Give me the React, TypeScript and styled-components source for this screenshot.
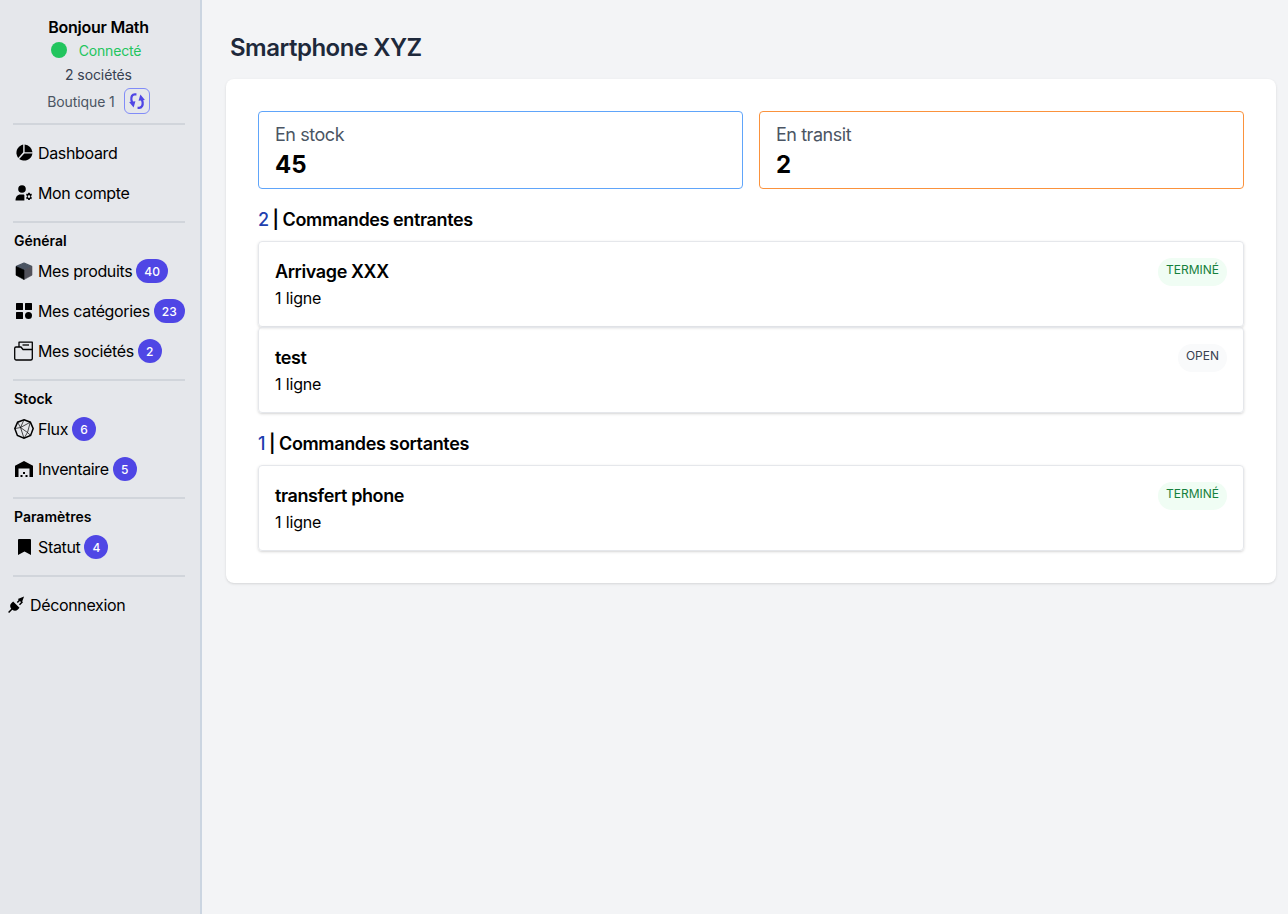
import React from "react";
import styled, { createGlobalStyle } from "styled-components";

const Global = createGlobalStyle`
  html, body { margin: 0; padding: 0; height: 100%; }
  body { font-family: Inter, "Liberation Sans", sans-serif; background: #f3f4f6; color: #000; }
  * { box-sizing: border-box; }
`;

const Layout = styled.div`
  display: flex;
  min-height: 914px;
`;
const Sidebar = styled.aside`
  width: 202px;
  flex: none;
  background: #e5e7eb;
  border-right: 2px solid #cbd5e1;
  padding: 15px 0 0 13px;
`;
const SideInner = styled.div`
  width: 172px;
`;
const UserBlock = styled.div`
  display: flex;
  flex-direction: column;
  align-items: center;
  margin-left: -1px;
`;
const Hello = styled.div`
  font-size: 16px;
  line-height: 24px;
  font-weight: 600;
  letter-spacing: -0.25px;
`;
const Status = styled.div`
  display: flex;
  align-items: center;
  height: 20px;
  margin: 1px 5px 0 0;
  font-size: 14px;
  letter-spacing: -0.2px;
  color: #22c55e;
  gap: 12px;
`;
const Dot = styled.span`
  width: 16px;
  height: 16px;
  border-radius: 50%;
  background: #22c55e;
`;
const Count = styled.div`
  font-size: 14px;
  line-height: 20px;
  letter-spacing: -0.1px;
  color: #374151;
  margin-top: 5px;
`;
const Shop = styled.div`
  display: flex;
  align-items: center;
  gap: 9px;
  font-size: 14px;
  letter-spacing: -0.1px;
  color: #4b5563;
  margin-top: 3px;
`;
const SwitchButton = styled.button`
  width: 26px;
  height: 26px;
  padding: 0;
  border: 1px solid #818cf8;
  border-radius: 6px;
  background: transparent;
  color: #4f46e5;
  display: flex;
  align-items: center;
  justify-content: center;
`;
const Divider = styled.hr<{ $top: number }>`
  border: 0;
  height: 2px;
  background: #d1d5db;
  margin: ${(p) => p.$top}px 0 0;
`;
const Section = styled.div`
  font-size: 14px;
  line-height: 20px;
  font-weight: 600;
  margin: 8px 0 0 1px;
`;
const Item = styled.div<{ $gap?: number; $outdent?: boolean }>`
  display: flex;
  align-items: center;
  height: 24px;
  margin-top: ${(p) => p.$gap ?? 16}px;
  margin-left: ${(p) => (p.$outdent ? -8 : 0)}px;
  font-size: 16px;
  letter-spacing: -0.35px;
  white-space: nowrap;
`;
const IconBox = styled.span`
  width: 22px;
  height: 24px;
  margin-right: 3px;
  flex: none;
  display: flex;
  align-items: center;
  justify-content: center;
`;
const Badge = styled.span`
  min-width: 24px;
  height: 24px;
  padding: 0 8px;
  margin-left: 4px;
  border-radius: 12px;
  background: #4f46e5;
  color: #fff;
  font-size: 12px;
  font-weight: 500;
  letter-spacing: 0;
  display: flex;
  align-items: center;
  justify-content: center;
`;
const Main = styled.main`
  flex: 1;
  padding: 32px 12px 0 24px;
  min-width: 0;
`;
const Title = styled.h1`
  margin: 0 0 15px 4px;
  font-size: 24px;
  line-height: 32px;
  font-weight: 600;
  letter-spacing: -0.5px;
  color: #1e293b;
`;
const Card = styled.section`
  background: #fff;
  border-radius: 8px;
  padding: 32px;
  box-shadow: 0 1px 3px rgba(0, 0, 0, 0.1), 0 1px 2px -1px rgba(0, 0, 0, 0.1);
`;
const Stats = styled.div`
  display: grid;
  grid-template-columns: 1fr 1fr;
  gap: 16px;
`;
const Stat = styled.div<{ $color: string }>`
  height: 78px;
  border: 1px solid ${(p) => p.$color};
  border-radius: 4px;
  padding: 11px 16px;
`;
const StatLabel = styled.div`
  font-size: 18px;
  line-height: 24px;
  letter-spacing: -0.45px;
  color: #4b5563;
`;
const StatValue = styled.div`
  font-size: 24px;
  line-height: 32px;
  font-weight: 700;
  margin-top: 2px;
`;
const Heading = styled.h2`
  margin: 19px 0 9px;
  font-size: 18px;
  line-height: 24px;
  font-weight: 600;
  letter-spacing: -0.36px;
  word-spacing: -0.3px;
`;
const Num = styled.span`
  color: #1e40af;
  font-weight: 500;
`;
const Order = styled.div`
  height: 86px;
  border: 1px solid #e5e7eb;
  border-radius: 4px;
  padding: 16px;
  box-shadow: 0 1px 3px rgba(0, 0, 0, 0.14), 0 1px 2px -1px rgba(0, 0, 0, 0.1);
  display: flex;
  justify-content: space-between;
`;
const OrderName = styled.div`
  font-size: 18px;
  line-height: 28px;
  font-weight: 600;
  letter-spacing: -0.4px;
`;
const OrderLines = styled.div`
  font-size: 16px;
  line-height: 24px;
  letter-spacing: -0.15px;
`;
const Pill = styled.span<{ $done?: boolean }>`
  height: 28px;
  padding: 0 8px;
  border-radius: 14px;
  font-size: 12px;
  line-height: 24px;
  background: ${(p) => (p.$done ? "#f0fdf4" : "#f9fafb")};
  color: ${(p) => (p.$done ? "#15803d" : "#374151")};
`;

const Svg = styled.svg`
  display: block;
`;

const Pie = () => (
  <Svg width="18" height="18" viewBox="0 0 18 18" fill="#000">
    <path d="M8.200.5v7.700L3.200 14A8.500 8.500 0 0 1 8.200.5z" />
    <path d="M9.600.5a8.500 8.500 0 0 1 7.900 7.700H9.600z" />
    <path d="M9.300 9.600h8.200a8.500 8.500 0 0 1-13.300 5.400z" />
  </Svg>
);
const UserGear = () => (
  <Svg width="18" height="16" viewBox="0 0 18 16" fill="#000">
    <circle cx="7" cy="4" r="3.800" />
    <path d="M.5 15.500c0-3.800 2-6 5-6h2.600c.9 0 1.300.3 1.300 1v5z" />
    <path fillRule="evenodd" d="M13.200 7.800h1.600l.3 1.200 1.100-.4.8 1.400-.9.8v1.200l.9.8-.8 1.400-1.100-.4-.3 1.200h-1.600l-.3-1.200-1.100.4-.8-1.400.9-.8v-1.200l-.9-.8.8-1.400 1.100.4zM14 10.300a1.300 1.300 0 1 0 0 2.600 1.300 1.300 0 0 0 0-2.600z" />
  </Svg>
);
const Cube = () => (
  <Svg width="18" height="18" viewBox="0 0 18 18" strokeLinejoin="round">
    <path d="M9 1l7.600 3.400L9 8 1.400 4.400z" fill="#4b5563" stroke="#4b5563" strokeWidth="1.200" />
    <path d="M17 4.600v8.600L9 17.600V8z" fill="#52525b" stroke="#52525b" strokeWidth=".6" />
    <path d="M1 4.600v8.600l8 4.400V8z" fill="#000" stroke="#000" strokeWidth=".6" />
  </Svg>
);
const Grid = () => (
  <Svg width="16" height="16" viewBox="0 0 16 16" fill="#000">
    <rect x="0" y="0" width="7" height="7" rx=".5" />
    <rect x="9" y="0" width="7" height="7" rx=".5" />
    <rect x="0" y="9" width="7" height="7" rx=".5" />
    <circle cx="12.500" cy="12.500" r="3.500" />
  </Svg>
);
const Folder = () => (
  <Svg width="20" height="20" viewBox="0 0 20 20" fill="none" stroke="#000" strokeWidth="1.300" strokeLinejoin="round">
    <path d="M5 6V1.200h13.300v16.400a1.500 1.500 0 0 1-1.500 1.400H2.200a1.500 1.500 0 0 1-1.500-1.500V7.300A1.300 1.300 0 0 1 2 6h5l2 2.500h9.300" />
    <path d="M8.500 4h6.500" />
  </Svg>
);
const Poly = () => (
  <Svg width="20" height="20" viewBox="0 0 20 20" fill="none" stroke="#000">
    <path strokeWidth="1.500" d="M10 .8l6.400 2.400 2.800 6.400-2.600 6.800L10 19.200l-6.600-2.800L.8 9.600l2.800-6.400z" />
    <path strokeWidth=".7" d="M10 .8L6.500 8.500l7 5 2.800-10.300M6.500 8.500L.8 9.600M6.500 8.500L10 19.200M13.500 13.500l3.100 2.900M3.600 3.200l2.900 5.300M6.500 8.500l9.900-5.300M13.500 13.500L10 19.200" />
  </Svg>
);
const Warehouse = () => (
  <Svg width="18" height="16" viewBox="0 0 18 16" fill="#000">
    <path fillRule="evenodd" d="M0 4.800L9 0l9 4.800V16h-3.500V7.500h-11V16H0z" />
    <rect x="8" y="11" width="2" height="2" />
    <rect x="5.500" y="14" width="2" height="2" />
    <rect x="10.500" y="14" width="2" height="2" />
  </Svg>
);
const Bookmark = () => (
  <Svg width="13" height="16" viewBox="0 0 13 16" fill="#000">
    <path d="M1 0h11a1 1 0 0 1 1 1v15l-6.500-3.600L0 16V1a1 1 0 0 1 1-1z" />
  </Svg>
);
const Plug = () => (
  <Svg width="18" height="18" viewBox="0 0 17 17" fill="#000">
    <path d="M5.800 5.200l6 6-1.500 1.500a4 4 0 0 1-5.300.3L2 16l-1-1 3-3a4 4 0 0 1 .3-5.300z" />
    <path d="M9.200 5.700L12 2.900l1 1-2.800 2.800zM11.300 7.800l2.800-2.800 1 1-2.800 2.800z" />
    <path d="M10.200 2.800L16.100.5l-2.200 5.900z" />
  </Svg>
);
const Sync = () => (
  <Svg width="18" height="18" viewBox="0 0 16 16" fill="none" stroke="currentColor" strokeWidth="2">
    <path d="M7.500 2H6C3.800 2 2.600 4.200 3 7c.2 1.300.7 2.300 1.300 3.400" />
    <path d="M1 8.800l4 5 1.600-5.600z" fill="currentColor" stroke="none" />
    <path d="M8.500 14H10c2.200 0 3.400-2.200 3-5-.2-1.300-.7-2.300-1.300-3.400" />
    <path d="M15 7.200l-4-5-1.600 5.600z" fill="currentColor" stroke="none" />
  </Svg>
);

export default function App() {
  return (
    <Layout>
      <Global />
      <Sidebar>
        <SideInner>
          <UserBlock>
            <Hello>Bonjour Math</Hello>
            <Status>
              <Dot />
              Connecté
            </Status>
            <Count>2 sociétés</Count>
            <Shop>
              Boutique 1
              <SwitchButton aria-label="Changer de boutique">
                <Sync />
              </SwitchButton>
            </Shop>
          </UserBlock>
          <Divider $top={9} />
          <Item>
            <IconBox><Pie /></IconBox>Dashboard
          </Item>
          <Item>
            <IconBox><UserGear /></IconBox>Mon compte
          </Item>
          <Divider $top={16} />
          <Section>Général</Section>
          <Item $gap={8}>
            <IconBox><Cube /></IconBox>Mes produits<Badge>40</Badge>
          </Item>
          <Item>
            <IconBox><Grid /></IconBox>Mes catégories<Badge>23</Badge>
          </Item>
          <Item>
            <IconBox><Folder /></IconBox>Mes sociétés<Badge>2</Badge>
          </Item>
          <Divider $top={16} />
          <Section>Stock</Section>
          <Item $gap={8}>
            <IconBox><Poly /></IconBox>Flux<Badge>6</Badge>
          </Item>
          <Item>
            <IconBox><Warehouse /></IconBox>Inventaire<Badge>5</Badge>
          </Item>
          <Divider $top={16} />
          <Section>Paramètres</Section>
          <Item $gap={8}>
            <IconBox><Bookmark /></IconBox>Statut<Badge>4</Badge>
          </Item>
          <Divider $top={16} />
          <Item $outdent>
            <IconBox><Plug /></IconBox>Déconnexion
          </Item>
        </SideInner>
      </Sidebar>
      <Main>
        <Title>Smartphone XYZ</Title>
        <Card>
          <Stats>
            <Stat $color="#60a5fa">
              <StatLabel>En stock</StatLabel>
              <StatValue>45</StatValue>
            </Stat>
            <Stat $color="#fb923c">
              <StatLabel>En transit</StatLabel>
              <StatValue>2</StatValue>
            </Stat>
          </Stats>
          <Heading><Num>2</Num> | Commandes entrantes</Heading>
          <Order>
            <div>
              <OrderName>Arrivage XXX</OrderName>
              <OrderLines>1 ligne</OrderLines>
            </div>
            <Pill $done>TERMINÉ</Pill>
          </Order>
          <Order>
            <div>
              <OrderName>test</OrderName>
              <OrderLines>1 ligne</OrderLines>
            </div>
            <Pill>OPEN</Pill>
          </Order>
          <Heading><Num>1</Num> | Commandes sortantes</Heading>
          <Order>
            <div>
              <OrderName>transfert phone</OrderName>
              <OrderLines>1 ligne</OrderLines>
            </div>
            <Pill $done>TERMINÉ</Pill>
          </Order>
        </Card>
      </Main>
    </Layout>
  );
}
